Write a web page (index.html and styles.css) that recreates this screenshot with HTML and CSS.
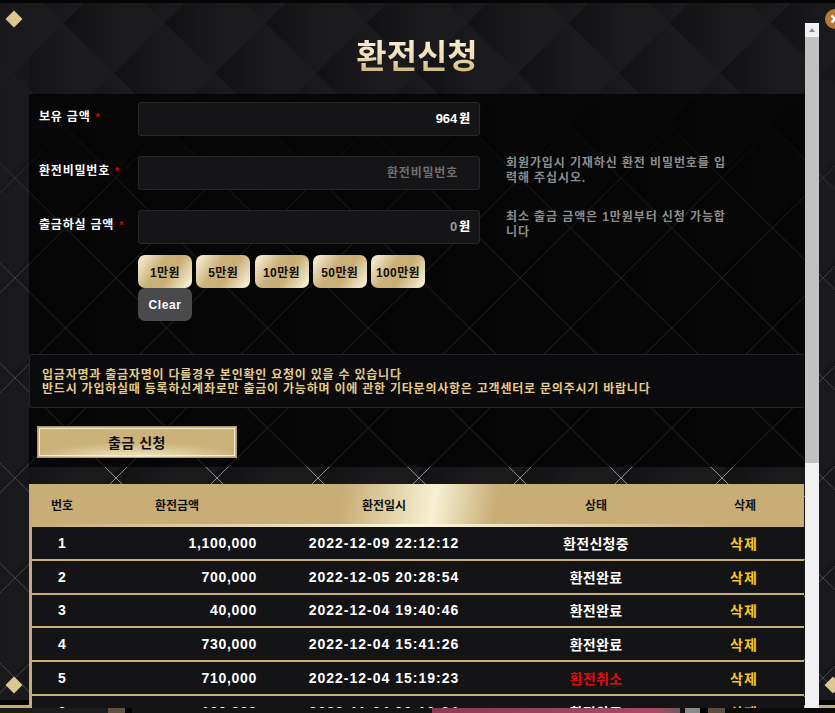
FILE: index.html
```html
<!DOCTYPE html>
<html lang="ko">
<head>
<meta charset="utf-8">
<title>환전신청</title>
<link rel="stylesheet" href="styles.css">
</head>
<body>
<div class="popup">
  <span class="diamond diamond-tl"></span>
  <span class="diamond diamond-bl"></span>
  <span class="diamond diamond-br"></span>
  <span class="close"><svg viewBox="0 0 20 20" width="20" height="20"><path d="M6.5 6.5l7 7M13.5 6.5l-7 7" stroke="#fff" stroke-width="2.4" fill="none"/></svg></span>
  <div class="content">
    <h1 class="title"><span>환전신청</span></h1>
    <section class="form">
      <div class="rows">
        <div class="label">보유 금액<span class="req">*</span></div>
        <div class="field"><div class="input"><b>964</b> <b class="won">원</b></div></div>
        <div class="help"></div>

        <div class="label">환전비밀번호<span class="req">*</span></div>
        <div class="field"><div class="input placeholder">환전비밀번호</div></div>
        <div class="help">회원가입시 기재하신 환전 비밀번호를 입력해 주십시오.</div>

        <div class="label">출금하실 금액<span class="req">*</span></div>
        <div class="field">
          <div class="input"><b class="zero">0</b> <b class="won">원</b></div>
          <div class="money">
            <button class="chip">1만원</button>
            <button class="chip">5만원</button>
            <button class="chip">10만원</button>
            <button class="chip">50만원</button>
            <button class="chip">100만원</button>
            <button class="chip clear">Clear</button>
          </div>
        </div>
        <div class="help">최소 출금 금액은 1만원부터 신청 가능합니다</div>
      </div>
      <div class="notice">입금자명과 출금자명이 다를경우 본인확인 요청이 있을 수 있습니다<br>반드시 가입하실때 등록하신계좌로만 출금이 가능하며 이에 관한 기타문의사항은 고객센터로 문의주시기 바랍니다</div>
      <button class="submit">출금 신청</button>
    </section>
    <div class="table-wrap">
      <table class="list">
        <colgroup><col class="c1"><col class="c2"><col class="c3"><col class="c4"><col class="c5"></colgroup>
        <thead>
          <tr><th>번호</th><th>환전금액</th><th>환전일시</th><th>상태</th><th>삭제</th></tr>
        </thead>
        <tbody>
          <tr><td>1</td><td class="amount">1,100,000</td><td>2022-12-09 22:12:12</td><td class="status">환전신청중</td><td class="del">삭제</td></tr>
          <tr><td>2</td><td class="amount">700,000</td><td>2022-12-05 20:28:54</td><td class="status">환전완료</td><td class="del">삭제</td></tr>
          <tr><td>3</td><td class="amount">40,000</td><td>2022-12-04 19:40:46</td><td class="status">환전완료</td><td class="del">삭제</td></tr>
          <tr><td>4</td><td class="amount">730,000</td><td>2022-12-04 15:41:26</td><td class="status">환전완료</td><td class="del">삭제</td></tr>
          <tr><td>5</td><td class="amount">710,000</td><td>2022-12-04 15:19:23</td><td class="status cancel">환전취소</td><td class="del">삭제</td></tr>
          <tr><td>6</td><td class="amount">100,000</td><td>2022-11-04 20:10:04</td><td class="status">환전완료</td><td class="del">삭제</td></tr>
        </tbody>
      </table>
    </div>
  </div>
  <div class="scrollbar">
    <div class="arrow"></div>
    <div class="thumb"></div>
  </div>
</div>
<div class="under">
  <i class="u1"></i><i class="u2"></i><i class="u3"></i><i class="u4"></i><i class="u5"></i><i class="u6"></i><i class="u7"></i><i class="u8"></i><i class="u9"></i><i class="u10"></i>
</div>
</body>
</html>
```
FILE: styles.css
```css
* { box-sizing: border-box; }
html, body { margin: 0; padding: 0; }
body {
  width: 835px;
  height: 713px;
  overflow: hidden;
  background: #000;
  font-family: "Liberation Sans", "Noto Sans CJK KR", sans-serif;
  font-weight: 700;
}
.popup {
  position: relative;
  height: 708px;
  padding: 23px 16px 0 0;
  display: flex;
  overflow: hidden;
  background: url("data:image/svg+xml,%3Csvg xmlns='http://www.w3.org/2000/svg' width='835' height='708'%3E%3Cdefs%3E%3ClinearGradient id='g'%3E%3Cstop offset='0' stop-color='%23111114'/%3E%3Cstop offset='.6' stop-color='%23111114' stop-opacity='0'/%3E%3C/linearGradient%3E%3ClinearGradient id='v' x2='0' y2='1'%3E%3Cstop offset='.16' stop-color='%23fff' stop-opacity='0'/%3E%3Cstop offset='.3' stop-color='%23fff' stop-opacity='.8'/%3E%3Cstop offset='.66' stop-color='%23fff'/%3E%3C/linearGradient%3E%3Cpattern id='c' width='101' height='100' x='13' y='73' patternUnits='userSpaceOnUse'%3E%3Cpath fill='url(%23g)' d='M0 0L50.5-50 101 0 50.5 50z'/%3E%3Cpath fill='url(%23g)' d='M50.5 50L101 0 151.5 50 101 100z'/%3E%3Cpath fill='url(%23g)' d='M-50.5 50L0 0 50.5 50 0 100z'/%3E%3Cpath fill='url(%23g)' d='M0 100L50.5 50 101 100 50.5 150z'/%3E%3C/pattern%3E%3Cpattern id='l' width='101' height='100' x='15' y='78' patternUnits='userSpaceOnUse'%3E%3Cpath stroke='%238c8c8c' stroke-width='1' fill='none' d='M0 0L101 100M101 0L0 100'/%3E%3C/pattern%3E%3Cmask id='m'%3E%3Crect width='835' height='708' fill='url(%23v)'/%3E%3C/mask%3E%3C/defs%3E%3Crect width='835' height='708' fill='%231b1b1e'/%3E%3Crect width='835' height='708' fill='url(%23c)'/%3E%3Crect width='835' height='708' fill='url(%23l)' mask='url(%23m)'/%3E%3Crect width='29' height='708' fill='%231a1a1d' opacity='.65'/%3E%3Crect x='819' width='16' height='708' fill='%231a1a1d' opacity='.65'/%3E%3Crect width='835' height='3' fill='%23050505'/%3E%3Crect y='700' width='835' height='5' fill='%23050505'/%3E%3Crect y='705' width='835' height='3' fill='%23c8ad76'/%3E%3C/svg%3E") no-repeat 0 0;
}

/* decorations */
.diamond {
  position: absolute;
  left: 8px;
  width: 12px;
  height: 12px;
  background: #dcc793;
  transform: rotate(45deg);
}
.diamond-tl { top: 13px; }
.diamond-bl { top: 679px; }
.diamond-br { top: 679px; left: 827px; }
.close {
  position: absolute;
  left: 825px;
  top: 9px;
  width: 20px;
  height: 20px;
  border-radius: 50%;
  background: #b67a38;
  display: flex;
}

/* scroll pane */
.content {
  flex: 1;
  min-width: 0;
  padding-left: 29px;
  overflow: hidden;
}
.scrollbar {
  width: 14px;
  background: #f1f1f1;
  flex: none;
}
.arrow {
  height: 14px;
  display: flex;
  align-items: center;
  justify-content: center;
}
.arrow::before {
  content: "";
  border: 3.5px solid transparent;
  border-top: 0;
  border-bottom: 4px solid #8a8a8a;
}
.thumb {
  height: 426px;
  background: #c1c1c1;
}

.title {
  margin: 0;
  height: 71px;
  padding-top: 10px;
  text-align: center;
  font-size: 33px;
  line-height: 48px;
  font-weight: 700;
}
.title span {
  background: linear-gradient(180deg, #f7ecd2 0%, #efdfb9 50%, #c9ac73 100%);
  -webkit-background-clip: text;
  background-clip: text;
  color: transparent;
}

/* form */
.form {
  background: rgba(0, 0, 0, .72);
  padding-top: 8px;
  padding-bottom: 9px;
}
.rows {
  display: grid;
  grid-template-columns: 99px 342px 250px;
  row-gap: 20px;
  padding-left: 10px;
}
.label {
  color: #fff;
  font-size: 12px;
  letter-spacing: .8px;
  line-height: 18px;
  padding-top: 6px;
}
.req {
  color: #c00d1e;
  font-size: 11px;
  margin-left: 5px;
}
.input {
  height: 34px;
  line-height: 32px;
  padding-right: 9px;
  text-align: right;
  background: #151518;
  border: 1px solid #27272b;
  border-radius: 3px;
  color: #fff;
  font-size: 13px;
  word-spacing: -2px;
}
.input .zero { color: #9a9a9a; }
.input .won { font-size: 12px; }
.input.placeholder {
  color: #6f6f70;
  font-size: 12px;
  letter-spacing: .8px;
  padding-right: 21px;
}
.help {
  margin-left: 26px;
  color: #8d8d8d;
  font-size: 12px;
  letter-spacing: .9px;
  line-height: 15px;
  word-break: break-all;
}
.money {
  width: 290px;
  margin-top: 11px;
  display: flex;
  flex-wrap: wrap;
  column-gap: 4.25px;
}
.chip {
  width: 54px;
  height: 33px;
  padding: 0;
  border: 0;
  border-radius: 7px;
  color: #111;
  font: inherit;
  font-size: 12px;
  letter-spacing: .4px;
  background: linear-gradient(125deg, #fbf6de 0%, #cbb17a 38%, #c9ae76 60%, #f7f1d4 95%);
}
.chip.clear {
  background: #4a4a4c;
  color: #fff;
  letter-spacing: .6px;
}
.notice {
  margin-top: 33px;
  height: 54px;
  padding: 13px 12px 0;
  background: #0b0b0d;
  border: 1px solid #232325;
  border-width: 1px 0 1px 1px;
  border-radius: 2px;
  color: #e5cc8a;
  font-size: 12px;
  letter-spacing: .78px;
  line-height: 14px;
  white-space: nowrap;
}
.submit {
  display: block;
  margin: 18px 0 0 8px;
  width: 200px;
  height: 32px;
  padding: 0;
  border: 1px solid #b09a68;
  outline: 1px solid #f4ecd2;
  outline-offset: -3px;
  color: #111;
  font: inherit;
  font-size: 14px;
  letter-spacing: .5px;
  background: radial-gradient(ellipse 55% 60% at 50% 110%, #f6f0d2 0%, #cbb17a 100%), #c8ad76;
}

/* table */
.table-wrap {
  margin-top: 17px;
  width: 775px;
  border-left: 3px solid #c8ad76;
}
.list {
  width: 772px;
  table-layout: fixed;
  border-collapse: separate;
  border-spacing: 0;
  color: #fff;
  font-size: 14px;
}
.c1 { width: 60px; }
.c2 { width: 170px; }
.c3 { width: 244px; }
.c4 { width: 180px; }
.c5 { width: 118px; }
.list thead tr {
  background:
    linear-gradient(90deg, #c8ad76 0%, #fdf8e0 50%, #c8ad76 90%) left bottom / 100% 3px no-repeat,
    linear-gradient(100deg, #c8ad76 40%, #f6f1d2 52%, #c8ad76 60%);
}
.list th {
  height: 43px;
  padding: 0 0 3px;
  color: #111;
  font-size: 12px;
  text-align: center;
}
.list td {
  height: 33.8px;
  padding: 0;
  text-align: center;
  letter-spacing: 1px;
  background: #141417;
  border-bottom: 2px solid #c8ad76;
}
.list td:first-child {
  padding-left: 1px;
}
.list td.amount {
  text-align: right;
  padding-right: 5px;
  letter-spacing: .7px;
}
.list td.status {
  letter-spacing: .3px;
}
.list td.cancel { color: #e00b0b; }
.list td.del {
  color: #f6c51a;
  font-size: 14px;
  padding-right: 2px;
}

/* page showing under the popup */
.under {
  display: flex;
  height: 5px;
  background: #141414;
}
.under i { display: block; height: 5px; }
.u1 { width: 108px; background: #1c1c1c; }
.u2 { width: 17px; background: #5d5240; }
.u3 { width: 7px; background: #000; }
.u4 { width: 300px; background: #141414; }
.u5 { width: 248px; background: linear-gradient(90deg, #8c3a52, #a84a66 90%, #6e5a60); }
.u6 { width: 5px; background: #111; }
.u7 { width: 15px; background: #8a8a8a; }
.u8 { width: 8px; background: #000; }
.u9 { width: 17px; background: #5a4c3e; }
.u10 { width: 110px; background: #0a0a0a; }
```
